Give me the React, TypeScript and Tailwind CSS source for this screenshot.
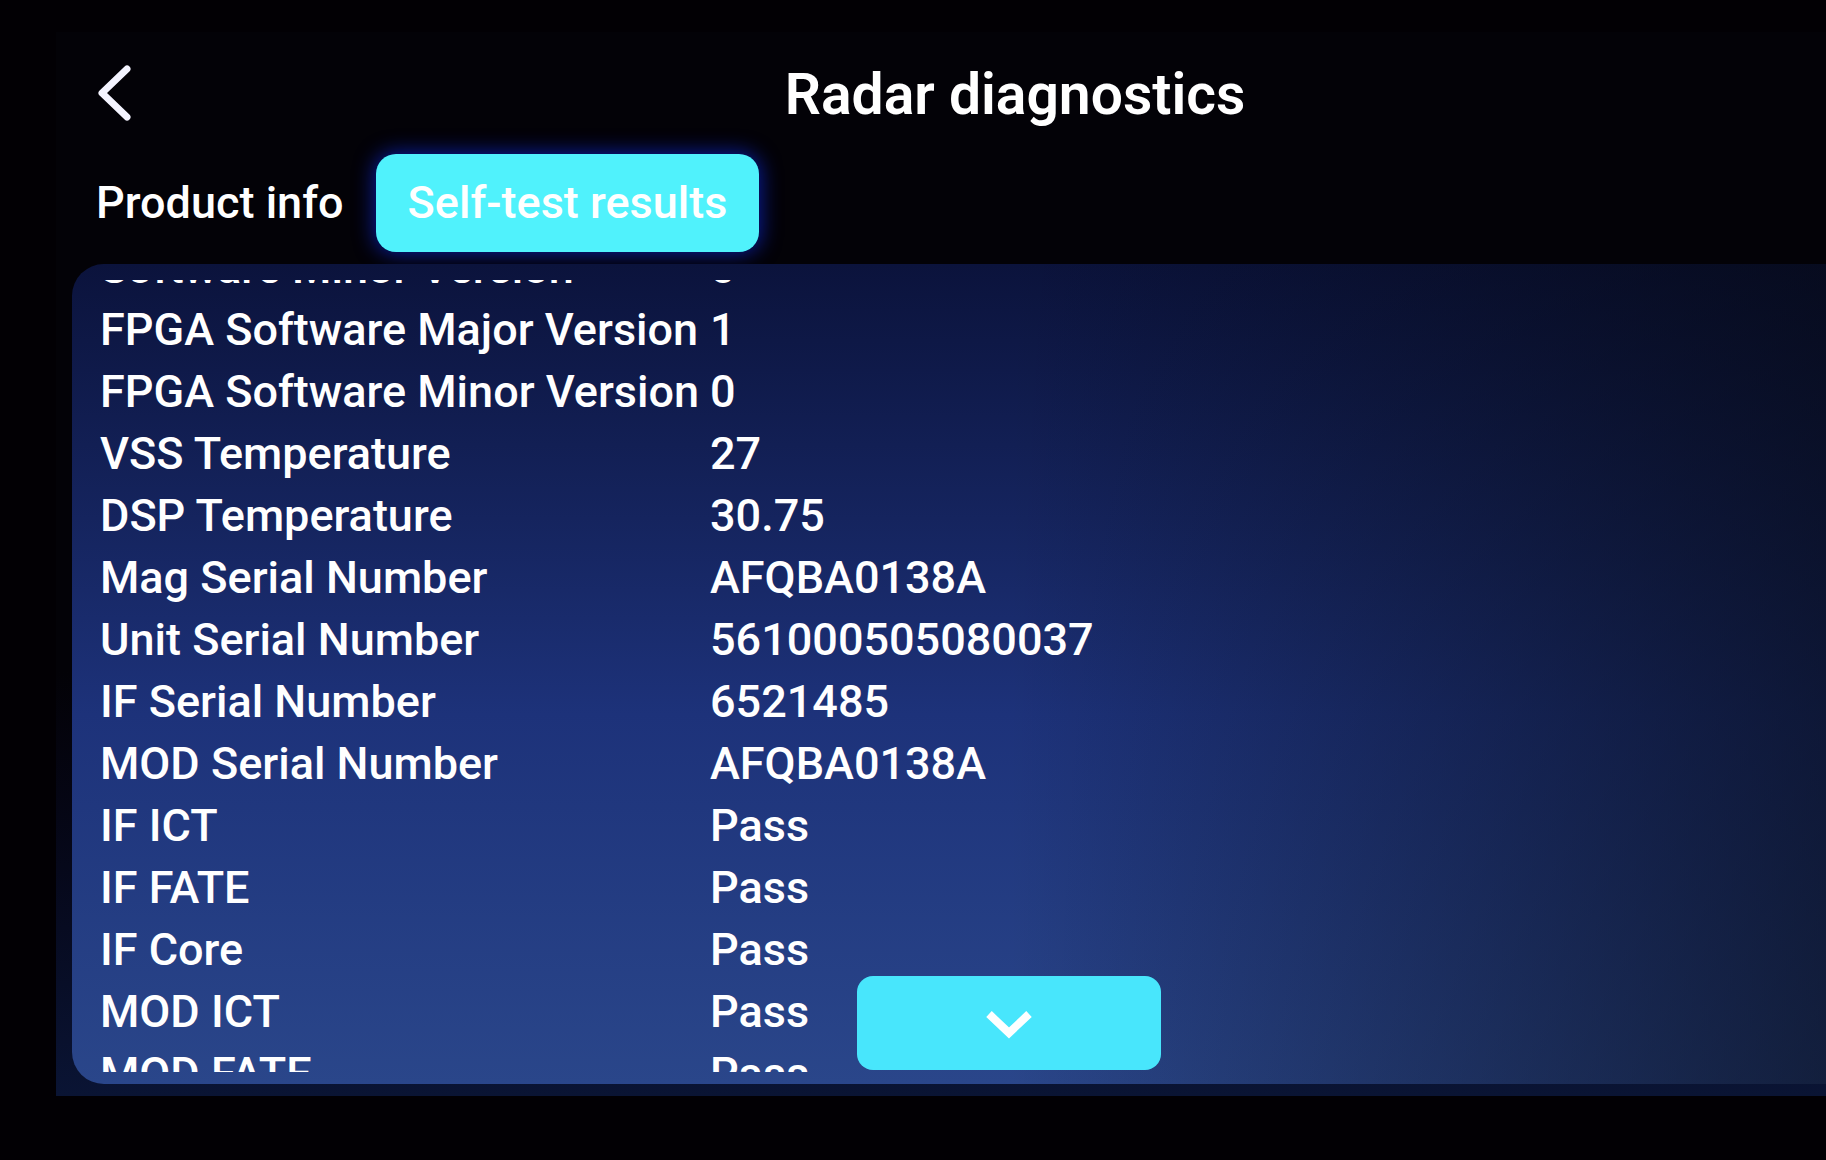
import { useLayoutEffect, useRef, useState } from 'react';

const TABS = ['Product info', 'Self-test results'];

const RESULTS = [
  ['Software Minor Version', '0'],
  ['FPGA Software Major Version', '1'],
  ['FPGA Software Minor Version', '0'],
  ['VSS Temperature', '27'],
  ['DSP Temperature', '30.75'],
  ['Mag Serial Number', 'AFQBA0138A'],
  ['Unit Serial Number', '561000505080037'],
  ['IF Serial Number', '6521485'],
  ['MOD Serial Number', 'AFQBA0138A'],
  ['IF ICT', 'Pass'],
  ['IF FATE', 'Pass'],
  ['IF Core', 'Pass'],
  ['MOD ICT', 'Pass'],
  ['MOD FATE', 'Pass'],
];

export default function App() {
  const [tab, setTab] = useState(1);
  const listRef = useRef<HTMLDivElement>(null);

  useLayoutEffect(() => {
    if (listRef.current) listRef.current.scrollTop = 43;
  }, []);

  const scrollDown = () => listRef.current?.scrollBy({ top: 62, behavior: 'smooth' });

  return (
    <div className="h-screen overflow-hidden bg-[#020004] pt-8 pb-16 pl-14 font-['Roboto',sans-serif] text-white">
      {/* the display runs on past the right edge of the window */}
      <main className="-mr-[140px] flex h-full flex-col bg-linear-to-b from-[#030207] from-60% to-[#0a1434] pb-3">
        <header className="relative flex h-[122px] items-center justify-center pt-[2px] pl-2">
          <button type="button" aria-label="Back" className="absolute left-9 p-1">
            <svg width="40" height="60" viewBox="0 0 40 60" fill="none" stroke="#f4f4ff" strokeWidth="7" strokeLinecap="round" strokeLinejoin="round">
              <path d="M31 5 L6 29 L31 53" />
            </svg>
          </button>
          <h1 className="text-[57px] leading-none font-semibold">Radar diagnostics</h1>
        </header>

        <nav className="flex h-[98px] pl-2">
          {TABS.map((name, i) => (
            <button
              key={name}
              type="button"
              onClick={() => setTab(i)}
              className={
                i === tab
                  ? 'rounded-[20px] bg-[#50f2fc] px-8 text-[45px] font-medium shadow-[0_0_20px_2px_#0a1c9a]'
                  : 'rounded-[20px] px-8 text-[45px] font-medium'
              }
            >
              {name}
            </button>
          ))}
        </nav>

        <section className="relative mt-3 mr-5 ml-4 flex min-h-0 flex-1 flex-col rounded-[32px] bg-linear-to-b from-[#0b133c] via-[#1d327a] via-55% to-[#2a468a] pt-4 pb-3">
          <div className="pointer-events-none absolute inset-0 rounded-[32px] bg-linear-to-r from-transparent from-50% to-[#04060c]/70" />
          <div ref={listRef} className="relative min-h-0 flex-1 overflow-y-auto pl-7 [scrollbar-width:none]">
            <table className="text-left text-[45px] leading-[62px] font-medium">
              <tbody>
                {RESULTS.map(([label, value]) => (
                  <tr key={label}>
                    <th scope="row" className="w-[610px] p-0 font-medium whitespace-nowrap">{label}</th>
                    <td className="p-0">{value}</td>
                  </tr>
                ))}
              </tbody>
            </table>
          </div>
          <button
            type="button"
            aria-label="Scroll down"
            onClick={scrollDown}
            className="absolute bottom-[14px] left-1/2 flex h-[94px] w-[304px] -translate-x-1/2 items-center justify-center rounded-[16px] bg-[#48e6fc]"
          >
            <svg width="48" height="32" viewBox="0 0 48 32" fill="none" stroke="white" strokeWidth="8">
              <path d="M4 7 L24 26 L44 7" />
            </svg>
          </button>
        </section>
      </main>
    </div>
  );
}
